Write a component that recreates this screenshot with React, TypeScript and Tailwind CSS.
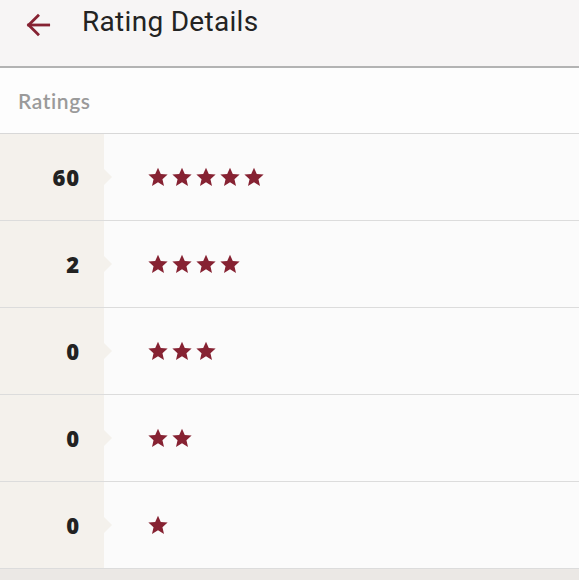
import React from 'react';

const rows = [
  { count: 60, stars: 5 },
  { count: 2, stars: 4 },
  { count: 0, stars: 3 },
  { count: 0, stars: 2 },
  { count: 0, stars: 1 },
];

const Star = () => (
  <svg viewBox="0 0 24 24" className="w-[22px] h-[22px]" fill="#862232">
    <path d="M12 1.8l3.05 6.9 7.45.7-5.65 4.95 1.7 7.35L12 17.85 5.45 21.7l1.7-7.35L1.5 9.4l7.45-.7z" />
  </svg>
);

export default function App() {
  return (
    <div className="w-[579px] h-[580px] overflow-hidden bg-[#ebe8e5] font-['Lato',sans-serif]">
      <header className="h-[68px] bg-[#f7f5f5] flex items-start pt-[6px] border-b-2 border-[#b3b3b3]">
        <button className="ml-[22px] mt-[3px] w-[32px] h-[32px] flex items-center justify-center">
          <svg viewBox="0 0 24 24" className="w-[32px] h-[32px]" fill="none" stroke="#862232" strokeWidth="2.1" strokeLinecap="square">
            <path d="M20 12H5" />
            <path d="M12 5l-7 7 7 7" />
          </svg>
        </button>
        <h1 className="ml-[28px] text-[28px] leading-[32px] text-[#232323] font-['Roboto',sans-serif] tracking-[0.3px]">
          Rating Details
        </h1>
      </header>

      <div className="h-[66px] bg-[#fdfdfd] border-b border-[#d8d8d8] flex items-center pl-[18px]">
        <span className="text-[21px] text-[#9a9a9a] font-semibold tracking-[0.6px]">Ratings</span>
      </div>

      {rows.map((r) => (
        <div key={r.stars} className="flex h-[87px] border-b border-[#dcdcdc] bg-[#fbfbfb]">
          <div className="relative w-[104px] bg-[#f4f1ec] flex items-center justify-end pr-[24px]">
            <span className="text-[22px] font-extrabold text-[#222] font-['Open_Sans',sans-serif] tracking-[0.8px]">{r.count}</span>
            <span className="absolute -right-[8px] top-1/2 -translate-y-1/2 w-0 h-0 border-y-[8px] border-y-transparent border-l-[8px] border-l-[#f4f1ec]" />
          </div>
          <div className="flex items-center pl-[43px] gap-[2px]">
            {Array.from({ length: r.stars }).map((_, i) => (
              <Star key={i} />
            ))}
          </div>
        </div>
      ))}
    </div>
  );
}
